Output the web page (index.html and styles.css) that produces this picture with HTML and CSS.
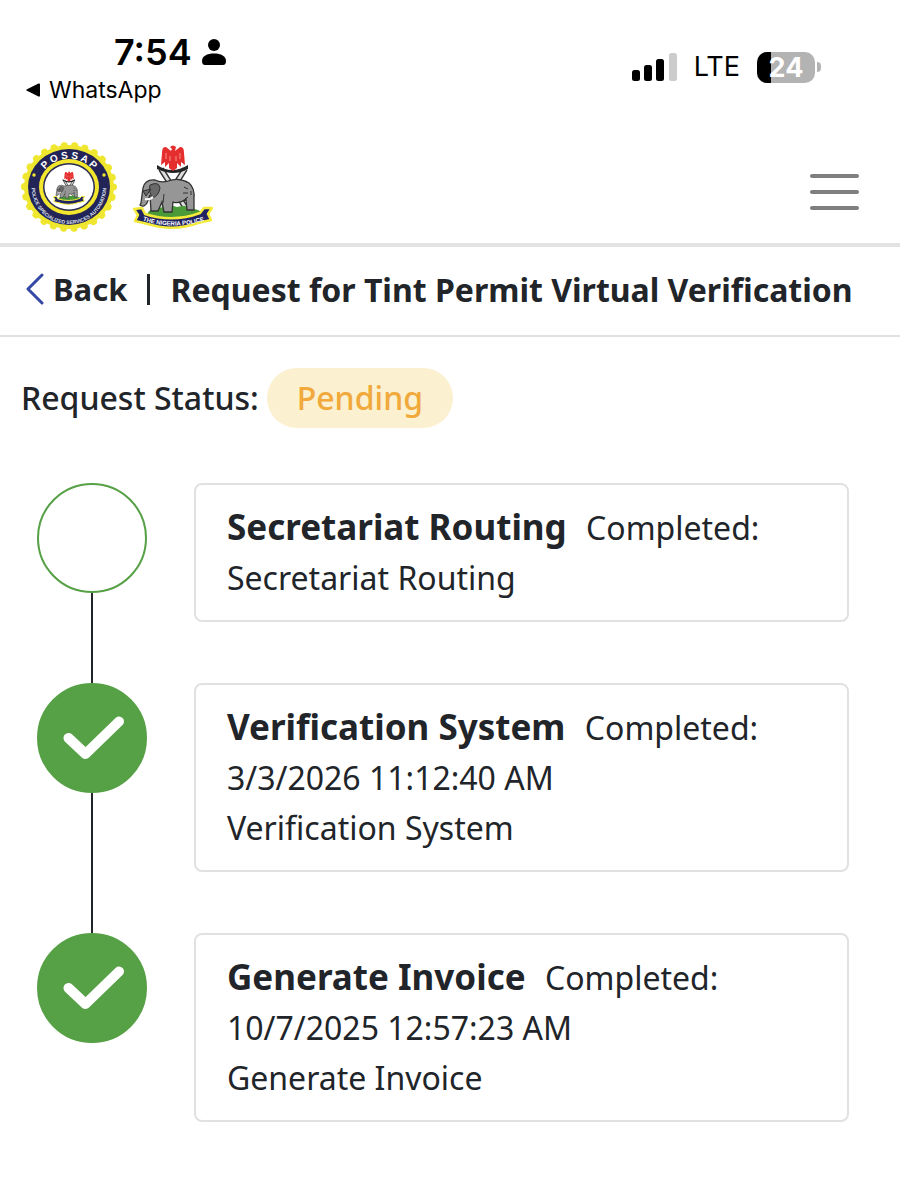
FILE: index.html
```html
<!DOCTYPE html>
<html lang="en">
<head>
<meta charset="utf-8">
<meta name="viewport" content="width=device-width, initial-scale=1">
<title>Request for Tint Permit Virtual Verification</title>
<link rel="stylesheet" href="styles.css">
</head>
<body>
<div class="device-bar">
  <div class="device-left">
    <div class="clock"><span>7:54</span>
      <svg class="person" viewBox="0 0 24 26" aria-hidden="true"><circle cx="12" cy="6" r="6"/><path d="M0 22C0 17 5 14.500 12 14.500S24 17 24 22C24 24.500 23 26 21 26H3C1 26 0 24.500 0 22Z"/></svg>
    </div>
    <a class="return-app" href="#"><svg class="triangle" viewBox="0 0 14 14" aria-hidden="true"><path d="M1 6.200L12.500.500Q14 0 14 1.500V12.500Q14 14 12.500 13.500L1 7.800Q-.500 7 1 6.200Z"/></svg>WhatsApp</a>
  </div>
  <div class="device-right">
    <svg class="signal" viewBox="0 0 45 28" aria-hidden="true"><rect x="0" y="17" width="8" height="11" rx="2.500"/><rect x="12" y="12" width="8" height="16" rx="2.500"/><rect x="24" y="6" width="8" height="22" rx="2.500"/><rect x="37" y="0" width="8" height="28" rx="2.500" fill="#ccc"/></svg>
    <span class="network">LTE</span>
    <div class="battery"><span class="battery-level">24</span><span class="battery-tip"></span></div>
  </div>
</div>

<header class="site-header">
  <a class="logos" href="#" aria-label="Home">
    <svg class="seal" viewBox="0 0 98 92" aria-hidden="true">
      <defs>
        <path id="arc-top" d="M18.500 46A30.500 28.500 0 0 1 79.500 46"/>
        <path id="arc-bottom" d="M12 37C8 62 25 83 49 83S90 62 86 37"/>
      </defs>
      <ellipse cx="49" cy="46" rx="45" ry="42" fill="#efe62f"/>
      <ellipse cx="49" cy="46" rx="44.500" ry="41.500" fill="none" stroke="#efe62f" stroke-width="7" stroke-dasharray="0.100 10.300" stroke-linecap="round"/>
      <ellipse cx="49" cy="46" rx="41" ry="38" fill="#222458"/>
      <ellipse cx="49" cy="46" rx="30" ry="28" fill="#f3e72e"/>
      <ellipse cx="49" cy="46" rx="26" ry="24" fill="#292b50"/>
      <ellipse cx="49" cy="46" rx="24.500" ry="22.500" fill="#fff"/>
      <text class="seal-name"><textPath href="#arc-top" startOffset="50%">P O S S A P</textPath></text>
      <text class="seal-motto"><textPath href="#arc-bottom" startOffset="50%">POLICE SPECIALIZED SERVICES AUTOMATION</textPath></text>
      <circle cx="14" cy="34" r="1.700" fill="#f3e72e"/><circle cx="84" cy="34" r="1.700" fill="#f3e72e"/>
      <use href="#crest" x="33" y="30" width="32" height="34"/>
    </svg>
    <svg class="police" viewBox="0 0 80 84" aria-hidden="true">
      <symbol id="crest" viewBox="0 0 80 84">
        <path d="M28 24L59 73M52 24L21 73" stroke="#333" stroke-width="6"/>
        <path d="M28 24L59 73M52 24L21 73" stroke="#ddd" stroke-width="3"/>
        <path d="M13 71Q17 61 27 63Q36 59 44 62Q54 59 60 64Q68 64 70 71Q42 78 13 71Z" fill="#4b9a3a"/>
        <path d="M24 20Q39 30 55 20L55 24Q41 32 24 24Z" fill="#252525"/>
        <path d="M37 2Q40-1 43 2L42 6L47 2Q51 1 51 8L52 20L48 17L48 22L44 18L44 23L40 26L36 23V18L32 22V17L28 20L29 8Q29 1 33 2L38 6L39 4Z" fill="#e52f2e"/>
        <path d="M33 8V14M47 8V14M37 11V16M43 11V16" stroke="#f2918c" stroke-width="1"/>
        <path d="M8 58Q9 50 10 43Q12 34 22 35Q28 38 35 36Q46 32 56 38Q62 43 61 54V65H54L53 54Q47 59 40 57L39 67H31L29 57L25 66H18L17 50L14 58Q11 63 7 60Z" fill="#969696" stroke="#333" stroke-width="1.300"/>
        <path d="M17 40Q26 36 27 43Q26 50 20 53Q15 47 17 40ZM10 46L18 44L13 51ZM30 58L31 49M51 42L55 44M50 48H55M55 52L52 54M58 46V50" fill="#696969" stroke="#333"/>
        <path d="M12 54Q17 55 20 52" fill="none" stroke="#fff" stroke-width="2"/>
        <path d="M1 64L9 63L12 69Q40 78 67 68L71 63L79 63L75 69L78 75L65 78Q39 87 15 79L2 76L5 70Z" fill="#202363" stroke="#f3ea3a" stroke-width="2.500" stroke-linejoin="round"/>
      </symbol>
      <use href="#crest"/>
      <path id="ribbon-line" d="M8 75Q40 86 73 75" fill="none"/>
      <text class="ribbon"><textPath href="#ribbon-line" startOffset="50%">THE NIGERIA POLICE</textPath></text>
    </svg>
  </a>
  <button class="menu" type="button" aria-label="Menu"><span></span><span></span><span></span></button>
</header>

<div class="title-bar">
  <a class="back" href="#"><svg class="chevron" viewBox="0 0 18 32" aria-hidden="true"><path d="M16 2L2 16L16 30"/></svg>Back</a>
  <span class="divider"></span>
  <h1>Request for Tint Permit Virtual Verification</h1>
</div>

<main>
  <p class="request-status">Request Status: <span class="pill">Pending</span></p>
  <ol class="timeline">
    <li class="step">
      <div class="track"><span class="marker"></span></div>
      <div class="card"><h2>Secretariat Routing</h2> <span>Completed:</span><p>Secretariat Routing</p></div>
    </li>
    <li class="step">
      <div class="track"><span class="marker done"><svg viewBox="0 0 62 44" aria-hidden="true"><path d="M5.500 22L22.500 38L56 5.500"/></svg></span></div>
      <div class="card"><h2>Verification System</h2> <span>Completed:</span><p>3/3/2026 11:12:40 AM</p><p>Verification System</p></div>
    </li>
    <li class="step">
      <div class="track"><span class="marker done"><svg viewBox="0 0 62 44" aria-hidden="true"><path d="M5.500 22L22.500 38L56 5.500"/></svg></span></div>
      <div class="card"><h2>Generate Invoice</h2> <span>Completed:</span><p>10/7/2025 12:57:23 AM</p><p>Generate Invoice</p></div>
    </li>
  </ol>
</main>
</body>
</html>
```
FILE: styles.css
```css
* { box-sizing: border-box; }
body { margin: 0; background: #fff; color: #212529; font: 32px/50px "Noto Sans", "Open Sans", sans-serif; }
a { color: inherit; text-decoration: none; }
h1, h2, p, ol { margin: 0; padding: 0; }

.device-bar { display: flex; justify-content: space-between; padding: 32px 79px 25px 26px; color: #000; font-family: Inter, sans-serif; }
.clock { display: flex; align-items: center; gap: 10px; padding-left: 88px; font-size: 36px; line-height: 40px; font-weight: 600; }
.person { width: 24px; height: 26px; }
.return-app { display: flex; align-items: center; gap: 9px; padding-top: 3px; font-size: 23px; line-height: 30px; font-weight: 400; }
.triangle { width: 14px; height: 14px; }
.device-right { display: flex; align-items: center; height: 70px; gap: 17px; }
.signal { width: 45px; height: 28px; }
.network { font-size: 27px; line-height: 36px; }
.battery { display: flex; align-items: center; gap: 2px; }
.battery-level { width: 58px; height: 31px; border-radius: 10px; background: linear-gradient(to right, #000 14px, #b3b3b3 14px); color: #fff; font-size: 27px; line-height: 31px; font-weight: 700; text-align: center; }
.battery-tip { width: 4px; height: 10px; border-radius: 0 4px 4px 0; background: #b3b3b3; }

.site-header { display: flex; align-items: center; justify-content: space-between; padding: 11px 41px 10px 20px; border-bottom: 4px solid #e3e3e3; }
.logos { display: flex; align-items: center; gap: 15px; }
.seal { width: 98px; height: 92px; }
.police { width: 80px; height: 84px; }
.seal-name { font: 700 10px "Liberation Sans", sans-serif; fill: #fff; text-anchor: middle; }
.seal-motto { font: 700 5px "Liberation Sans", sans-serif; fill: #dfe0ee; text-anchor: middle; }
.ribbon { font: 700 6px "Liberation Sans", sans-serif; fill: #fff; text-anchor: middle; }
.menu { display: flex; flex-direction: column; gap: 12px; margin-top: 10px; padding: 0; border: 0; background: none; }
.menu span { width: 49px; height: 4px; border-radius: 2px; background: #7f7f7f; }

.title-bar { display: flex; align-items: center; padding: 17px 26px 21px; border-bottom: 2px solid #e1e1e1; font-weight: 700; }
.back { display: flex; align-items: center; gap: 9px; font-size: 31px; }
.chevron { width: 18px; height: 32px; fill: none; stroke: #3548a5; stroke-width: 3; stroke-linecap: round; stroke-linejoin: round; }
.divider { width: 3px; height: 31px; margin: 0 20px; background: #212529; }
h1 { padding-top: 2px; font-size: 32px; line-height: 48px; font-weight: 700; }

main { padding: 31px 51px 79px 21px; }
.request-status { display: flex; align-items: center; gap: 8px; font-weight: 500; }
.pill { padding: 5px 30px; border-radius: 30px; background: #fbf0cf; color: #f0a93a; }
.timeline { display: flex; flex-direction: column; gap: 61px; margin-top: 55px; padding-left: 16px; list-style: none; }
.step { display: flex; gap: 47px; }
.track { position: relative; flex: none; width: 110px; }
.step:not(:last-child) .track::after { content: ""; position: absolute; left: 54px; top: 110px; bottom: -61px; width: 2px; background: #212529; }
.marker { display: flex; align-items: center; justify-content: center; height: 110px; border: 2px solid #56a045; border-radius: 50%; }
.done { background: #56a045; }
.done svg { width: 62px; height: 44px; margin-left: 4px; fill: none; stroke: #fff; stroke-width: 10; stroke-linecap: round; stroke-linejoin: round; }
.card { flex: 1; padding: 17px 31px; border: 2px solid #e1e1e1; border-radius: 8px; }
.card h2 { display: inline; margin-right: 11px; font-size: 35px; line-height: 50px; font-weight: 700; }
```
